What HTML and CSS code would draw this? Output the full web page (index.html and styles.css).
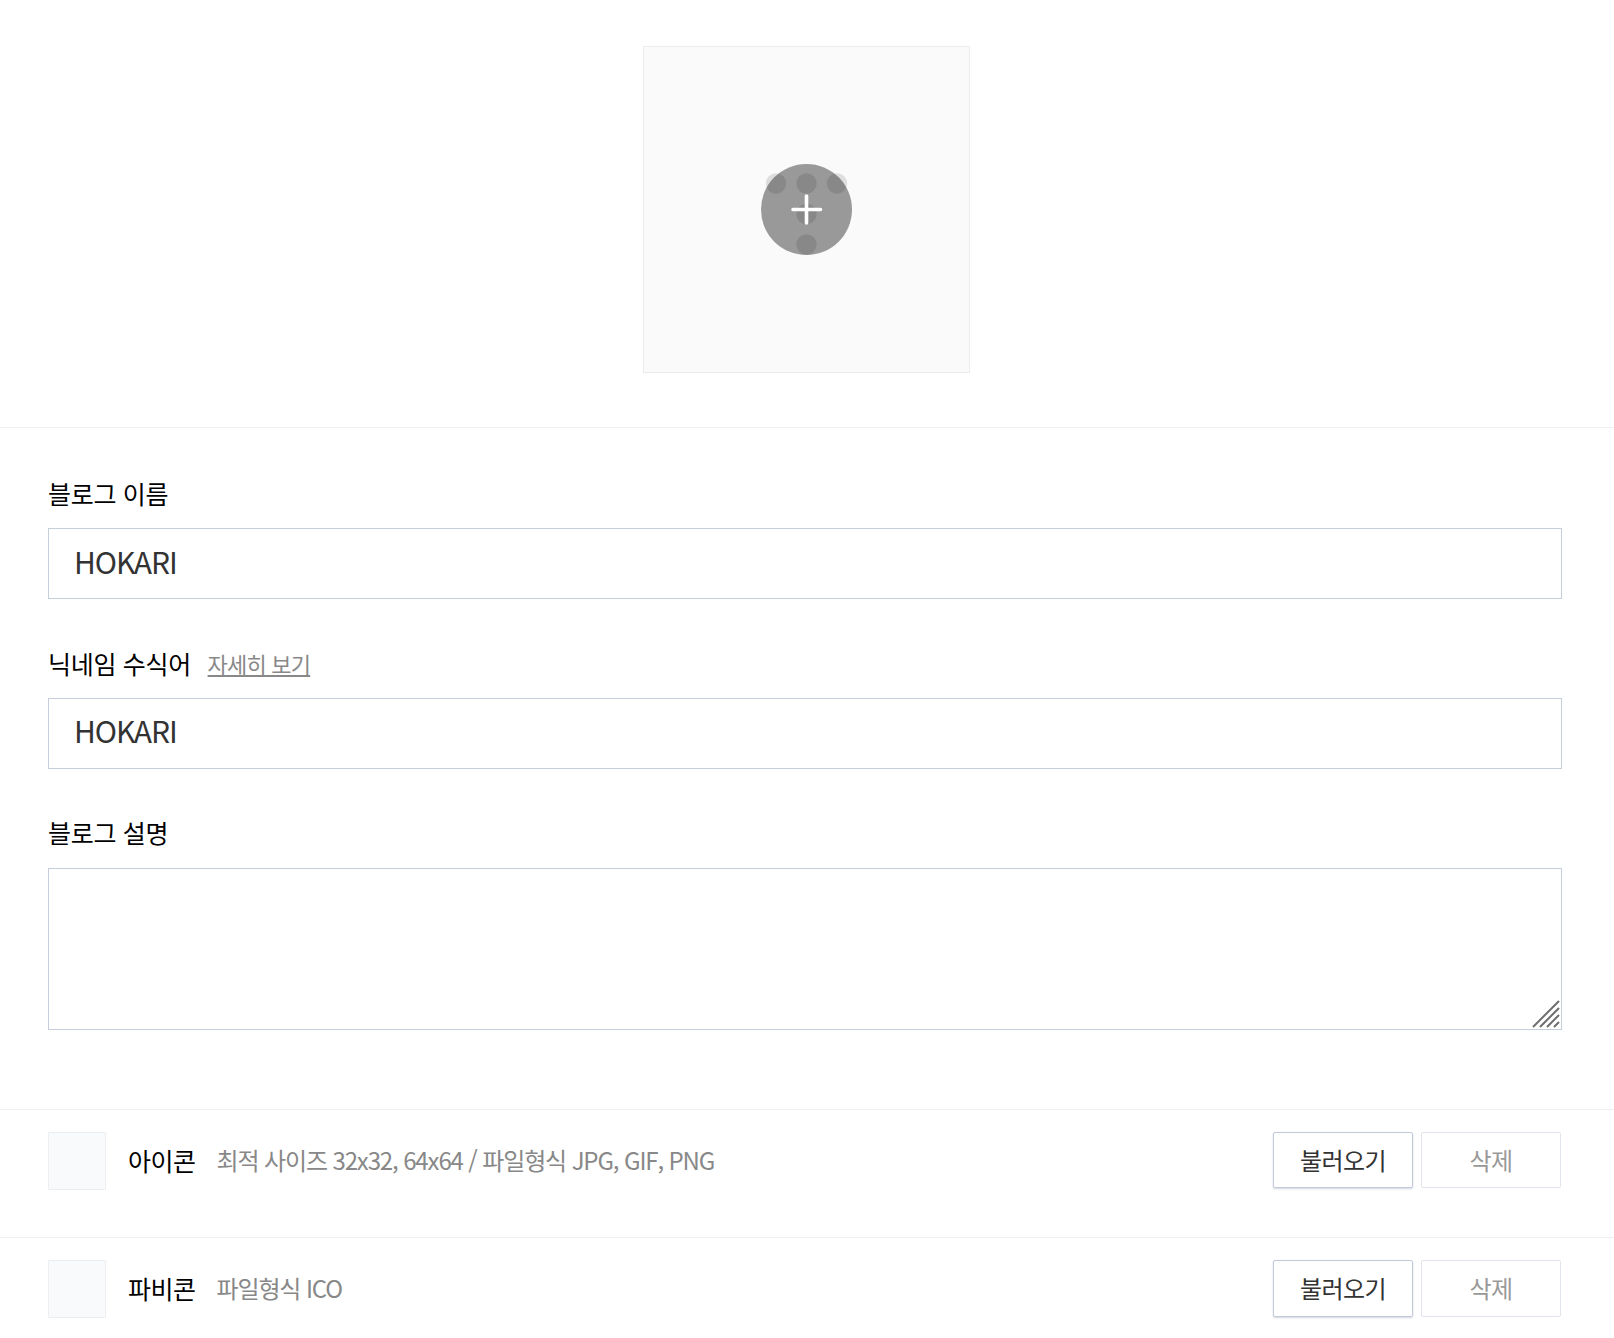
FILE: index.html
```html
<!DOCTYPE html>
<html lang="ko">
<head>
<meta charset="utf-8">
<title>블로그 설정</title>
<link rel="stylesheet" href="styles.css">
</head>
<body>
<section class="cover">
  <div class="cover-box">
    <button class="add-btn" type="button" aria-label="추가">
      <svg class="add-art" width="91" height="91" viewBox="0 0 91 91">
        <circle cx="45.5" cy="45.5" r="45.5" fill="#999"/>
        <g class="dots">
          <circle cx="15" cy="19.5" r="10.2"/>
          <circle cx="45.5" cy="19.5" r="10.2"/>
          <circle cx="76" cy="19.5" r="10.2"/>
          <circle cx="45.5" cy="50" r="10.2"/>
          <circle cx="45.5" cy="80.5" r="10.2"/>
        </g>
        <path d="M45.5 32v27M32 45.5h27.5" stroke="#fff" stroke-width="3.6" stroke-linecap="round" fill="none"/>
      </svg>
    </button>
  </div>
</section>
<section class="form">
  <div class="field">
    <label class="label">블로그 이름</label>
    <input class="input input-first" type="text" value="HOKARI">
  </div>
  <div class="field">
    <label class="label">닉네임 수식어 <a class="more" href="#">자세히 보기</a></label>
    <input class="input" type="text" value="HOKARI">
  </div>
  <div class="field">
    <label class="label label-last">블로그 설명</label>
    <div class="textarea-wrap">
      <textarea class="textarea"></textarea>
      <svg class="grip" width="28" height="28" viewBox="0 0 28 28">
        <path d="M1 27L27 1M8 27L27 8M15 27L27 15M22 27L27 22" stroke="#6e6e6e" stroke-width="2" fill="none"/>
      </svg>
    </div>
  </div>
</section>
<section class="row row-first">
  <div class="thumb"></div>
  <strong class="row-title">아이콘</strong>
  <span class="row-desc">최적 사이즈 32x32, 64x64 / 파일형식 JPG, GIF, PNG</span>
  <button class="btn btn-load" type="button">불러오기</button>
  <button class="btn btn-del" type="button">삭제</button>
</section>
<section class="row">
  <div class="thumb"></div>
  <strong class="row-title">파비콘</strong>
  <span class="row-desc">파일형식 ICO</span>
  <button class="btn btn-load" type="button">불러오기</button>
  <button class="btn btn-del" type="button">삭제</button>
</section>
</body>
</html>
```
FILE: styles.css
```css
* { box-sizing: border-box; }
html, body { margin: 0; padding: 0; background: #fff; }
body {
  font-family: "Noto Sans CJK KR", "Noto Sans", sans-serif;
  color: #000;
  height: 1338px;
  overflow: hidden;
}
.cover {
  height: 428px;
  padding: 46px 1px 0 0;
  border-bottom: 1px solid #f0f0f0;
  display: flex;
  justify-content: center;
}
.cover-box {
  width: 327px;
  height: 327px;
  background: #fafafa;
  border: 1px solid #ececec;
  display: flex;
  align-items: center;
  justify-content: center;
}
.add-btn { border: 0; padding: 0; background: none; width: 91px; height: 91px; display: block; }
.add-art { display: block; overflow: visible; }
.dots circle { fill: #000; fill-opacity: .11; }
.form { padding: 45px 52px 0 48px; height: 682px; border-bottom: 1px solid #f0f0f0; }
.field { margin-bottom: 44px; }
.label {
  display: block;
  font-size: 25px;
  line-height: 40px;
  letter-spacing: -.3px;
  height: 40px;
  margin-bottom: 15px;
}
.label-last { margin-top: -1px; margin-bottom: 16px; }
.more {
  margin-left: 10px;
  font-size: 22px;
  letter-spacing: -.8px;
  color: #888;
  text-decoration: underline;
  vertical-align: 1px;
}
.input, .textarea {
  display: block;
  width: 100%;
  border: 1px solid #c5cfdc;
  background: #fff;
  font-family: inherit;
  color: #333;
  outline: 0;
  border-radius: 0;
}
.input { height: 71px; padding: 0 25px 8px; font-size: 30px; letter-spacing: -1.1px; }
.input-first { padding-bottom: 5px; }
.textarea-wrap { position: relative; }
.textarea { height: 162px; resize: none; }
.grip { position: absolute; right: 2px; bottom: 2px; display: block; }
.row {
  display: flex;
  align-items: flex-start;
  height: 128px;
  padding: 22px 53px 0 48px;
  border-bottom: 1px solid #f0f0f0;
}
.row:last-child { border-bottom: 0; }
.thumb {
  width: 58px;
  height: 58px;
  background: #f9fafc;
  border: 1px solid #eceef1;
  border-radius: 1px;
  margin-right: 22px;
}
.row-title { font-size: 25px; font-weight: 400; line-height: 56px; letter-spacing: -.5px; margin-right: 21px; }
.row-desc { font-size: 24px; line-height: 56px; letter-spacing: -1.13px; color: #888; margin-right: auto; }
.btn {
  width: 140px;
  height: 56px;
  background: #fff;
  font-family: inherit;
  font-size: 24px;
  letter-spacing: -.6px;
  border-radius: 2px;
  padding: 0 0 2px;
}
.row:last-child .btn { height: 57px; }
.btn-load { border: 1px solid #c3cbdb; color: #333; box-shadow: 0 1px 2px rgba(120,135,160,.35); margin-right: 8px; }
.btn-del { border: 1px solid #e0e4ed; color: #999; }
```
